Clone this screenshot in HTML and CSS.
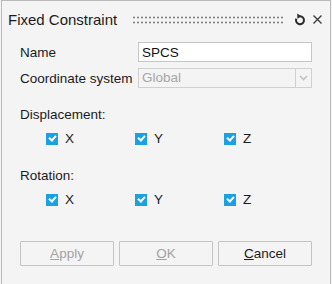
FILE: index.html
```html
<!DOCTYPE html>
<html>
<head>
    <title>Fixed Constraint</title>
    <link rel="stylesheet" href="styles.css">
</head>
<body>
    <div class="window">
        <div class="titlebar">
            <span class="title">Fixed Constraint</span>
            <div class="grip"></div>
            <svg class="icon-reset" width="12" height="13" viewBox="0 0 12 13">
                <path d="M6 3.2 A4 4 0 1 1 2.3 5.6" fill="none" stroke="#2b2b2b" stroke-width="2"/>
                <path d="M3.2 0.6 L7.4 3.2 L3.4 5.8 Z" fill="#2b2b2b"/>
            </svg>
            <svg class="icon-close" width="11" height="11" viewBox="0 0 11 11">
                <path d="M1.5 1.5 L9.5 9.5 M9.5 1.5 L1.5 9.5" stroke="#3a3a3a" stroke-width="1.3"/>
            </svg>
        </div>

        <div class="content">
            <div class="fields">
                <label class="field-label">Name</label>
                <input type="text" class="text-input" value="SPCS">
                <label class="field-label">Coordinate system</label>
                <div class="select disabled">
                    <span class="select-value">Global</span>
                    <span class="select-arrow">
                        <svg width="9" height="6" viewBox="0 0 9 6">
                            <path d="M1 1 L4.5 4.5 L8 1" fill="none" stroke="#c2c2c2" stroke-width="1.6"/>
                        </svg>
                    </span>
                </div>
            </div>

            <div class="section-label first">Displacement:</div>
            <div class="check-row">
                <label class="check"><span class="box"></span>X</label>
                <label class="check"><span class="box"></span>Y</label>
                <label class="check"><span class="box"></span>Z</label>
            </div>

            <div class="section-label">Rotation:</div>
            <div class="check-row">
                <label class="check"><span class="box"></span>X</label>
                <label class="check"><span class="box"></span>Y</label>
                <label class="check"><span class="box"></span>Z</label>
            </div>

            <div class="buttons">
                <button class="btn" disabled><u>A</u>pply</button>
                <button class="btn" disabled><u>O</u>K</button>
                <button class="btn"><u>C</u>ancel</button>
            </div>
        </div>
    </div>
</body>
</html>
```

FILE: styles.css
```css
body {
    margin: 0;
    background-color: #f4f4f4;
    font-family: "Liberation Sans", Arial, sans-serif;
    color: #1b1b1b;
}
.window {
    box-sizing: border-box;
    width: 330px;
    height: 284px;
    margin-left: 1px;
    border: 1px solid #b9b9b9;
    border-bottom: none;
    background-color: #f4f4f4;
}
.titlebar {
    display: flex;
    align-items: center;
    height: 37px;
    padding: 0 7px 0 6px;
}
.title {
    font-size: 15px;
    margin-right: 15px;
}
.grip {
    flex: 1;
    height: 10px;
    margin-right: 9px;
    background-image: radial-gradient(circle, #7e7e7e 0.9px, transparent 1.2px);
    background-size: 4px 5px;
}
.icon-reset {
    margin-right: 6px;
}
.content {
    padding: 4px 17px 0 18px;
    font-size: 13.5px;
}
.fields {
    display: grid;
    grid-template-columns: 118px 174px;
    grid-auto-rows: 20px;
    row-gap: 6px;
    align-items: center;
}
.text-input {
    box-sizing: border-box;
    height: 20px;
    width: 100%;
    border: 1px solid #c6c6c6;
    background-color: white;
    font-family: inherit;
    font-size: 13.5px;
    padding: 0 3px;
    color: #111;
    outline: none;
}
.select {
    box-sizing: border-box;
    height: 20px;
    display: flex;
    border: 1px solid #d0d0d0;
}
.select-value {
    flex: 1;
    padding-left: 3px;
    line-height: 18px;
    color: #a6a6a6;
}
.select-arrow {
    width: 15px;
    border-left: 1px solid #d0d0d0;
    display: flex;
    align-items: center;
    justify-content: center;
}
.section-label {
    line-height: 16px;
    margin-top: 21px;
}
.section-label.first {
    margin-top: 19px;
}
.check-row {
    display: flex;
    margin-top: 8px;
    padding-left: 26px;
    line-height: 16px;
}
.check {
    display: flex;
    align-items: center;
    width: 91px;
}
.box {
    width: 12px;
    height: 12px;
    margin-right: 7px;
    background-color: #1ba1e2;
    position: relative;
}
.box::after {
    content: "";
    position: absolute;
    left: 3px;
    top: 2px;
    width: 5px;
    height: 3px;
    border-left: 2px solid white;
    border-bottom: 2px solid white;
    transform: rotate(-48deg);
}
.buttons {
    display: flex;
    gap: 5px;
    margin-top: 33px;
}
.btn {
    width: 94px;
    height: 25px;
    border: 1px solid #c4c4c4;
    border-radius: 1px;
    background-color: #f4f4f4;
    font-family: inherit;
    font-size: 13.5px;
    color: #1b1b1b;
    padding: 0;
}
.btn:disabled {
    color: #a3a3a3;
}
```
